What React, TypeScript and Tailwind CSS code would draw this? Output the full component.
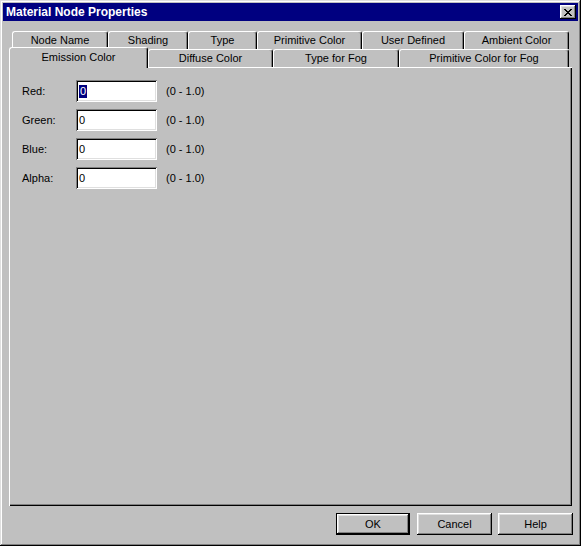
import { ReactNode } from 'react';

// Win95-style bevels
const raised =
  'shadow-[inset_-1px_-1px_#000,inset_1px_1px_#fff,inset_-2px_-2px_#808080,inset_2px_2px_#dfdfdf]';
const sunken =
  'shadow-[inset_1px_1px_#808080,inset_-1px_-1px_#fff,inset_2px_2px_#000,inset_-2px_-2px_#dfdfdf]';

const backTabs = [
  { label: 'Node Name', w: 96 },
  { label: 'Shading', w: 80 },
  { label: 'Type', w: 69 },
  { label: 'Primitive Color', w: 105 },
  { label: 'User Defined', w: 102 },
  { label: 'Ambient Color', w: 105 },
];

const frontTabs = [
  { label: 'Diffuse Color', w: 125 },
  { label: 'Type for Fog', w: 126 },
  { label: 'Primitive Color for Fog', w: 170 },
];

const fields = ['Red:', 'Green:', 'Blue:', 'Alpha:'];

function Tab({ label, w, children }: { label?: string; w: number; children?: ReactNode }) {
  return (
    <div
      style={{ width: w }}
      className="flex h-full items-center justify-center rounded-t-[3px] border-l border-t border-r border-white border-r-black shadow-[inset_-1px_0_#808080]"
    >
      {label}
      {children}
    </div>
  );
}

function Button({ label, isDefault }: { label: string; isDefault?: boolean }) {
  if (isDefault) {
    return (
      <div className="h-[22px] w-[74px] border border-black">
        <div className={`flex h-full items-center justify-center ${raised}`}>{label}</div>
      </div>
    );
  }
  return (
    <div className={`flex h-[22px] w-[75px] items-center justify-center ${raised}`}>{label}</div>
  );
}

export default function App() {
  return (
    <div
      className={`flex h-[546px] w-[581px] flex-col bg-[#c0c0c0] p-[3px] font-['Liberation_Sans',Arial,sans-serif] text-[11px] text-black shadow-[inset_-1px_-1px_#000,inset_1px_1px_#dfdfdf,inset_-2px_-2px_#808080,inset_2px_2px_#fff]`}
    >
      {/* title bar */}
      <div className="flex h-[18px] items-center justify-between bg-[#000080] pl-[3px] pr-[2px]">
        <span className="text-[12px] font-bold text-white">Material Node Properties</span>
        <div className={`flex h-[14px] w-[16px] items-center justify-center bg-[#c0c0c0] ${raised}`}>
          <svg width="8" height="7" viewBox="0 0 8 7" shapeRendering="crispEdges">
            <path d="M0 0h2v1h-2zM6 0h2v1h-2zM1 1h2v1h-2zM5 1h2v1h-2zM2 2h4v1h-4zM3 3h2v1h-2zM2 4h4v1h-4zM1 5h2v1h-2zM5 5h2v1h-2zM0 6h2v1h-2zM6 6h2v1h-2z" fill="#000" />
          </svg>
        </div>
      </div>

      <div className="flex flex-1 flex-col pl-[6px] pr-[5px] pt-[10px] pb-[8px]">
        {/* back row of tabs */}
        <div className="flex h-[18px] pl-[3px]">
          {backTabs.map((t) => (
            <Tab key={t.label} label={t.label} w={t.w} />
          ))}
        </div>

        {/* front row of tabs */}
        <div className="relative z-10 flex h-[18px]">
          <div className="relative -mt-[2px] flex h-[21px] w-[139px] items-start justify-center rounded-t-[3px] border-l border-t border-r border-white border-r-black bg-[#c0c0c0] pt-[1px] shadow-[inset_-1px_0_#808080]">
            Emission Color
          </div>
          {frontTabs.map((t) => (
            <Tab key={t.label} label={t.label} w={t.w} />
          ))}
        </div>

        {/* panel */}
        <div className="flex h-[439px] w-[563px] flex-col gap-[7px] border-l border-t border-white pl-[12px] pt-[12px] shadow-[inset_-1px_-1px_#000,inset_-2px_-2px_#808080]">
          {fields.map((f, i) => (
            <div key={f} className="flex h-[22px] items-center">
              <span className="w-[54px]">{f}</span>
              <div className={`flex h-[22px] w-[81px] items-center bg-white pl-[3px] text-black ${sunken}`}>
                {i === 0 ? (
                  <span className="bg-[#000080] px-[1px] leading-[13px] text-white">0</span>
                ) : (
                  <span className="text-black">0</span>
                )}
              </div>
              <span className="ml-[9px]">(0 - 1.0)</span>
            </div>
          ))}
        </div>

        {/* buttons */}
        <div className="mt-[7px] flex justify-end gap-[7px]">
          <Button label="OK" isDefault />
          <div className="flex gap-[6px]">
            <Button label="Cancel" />
            <Button label="Help" />
          </div>
        </div>
      </div>
    </div>
  );
}
